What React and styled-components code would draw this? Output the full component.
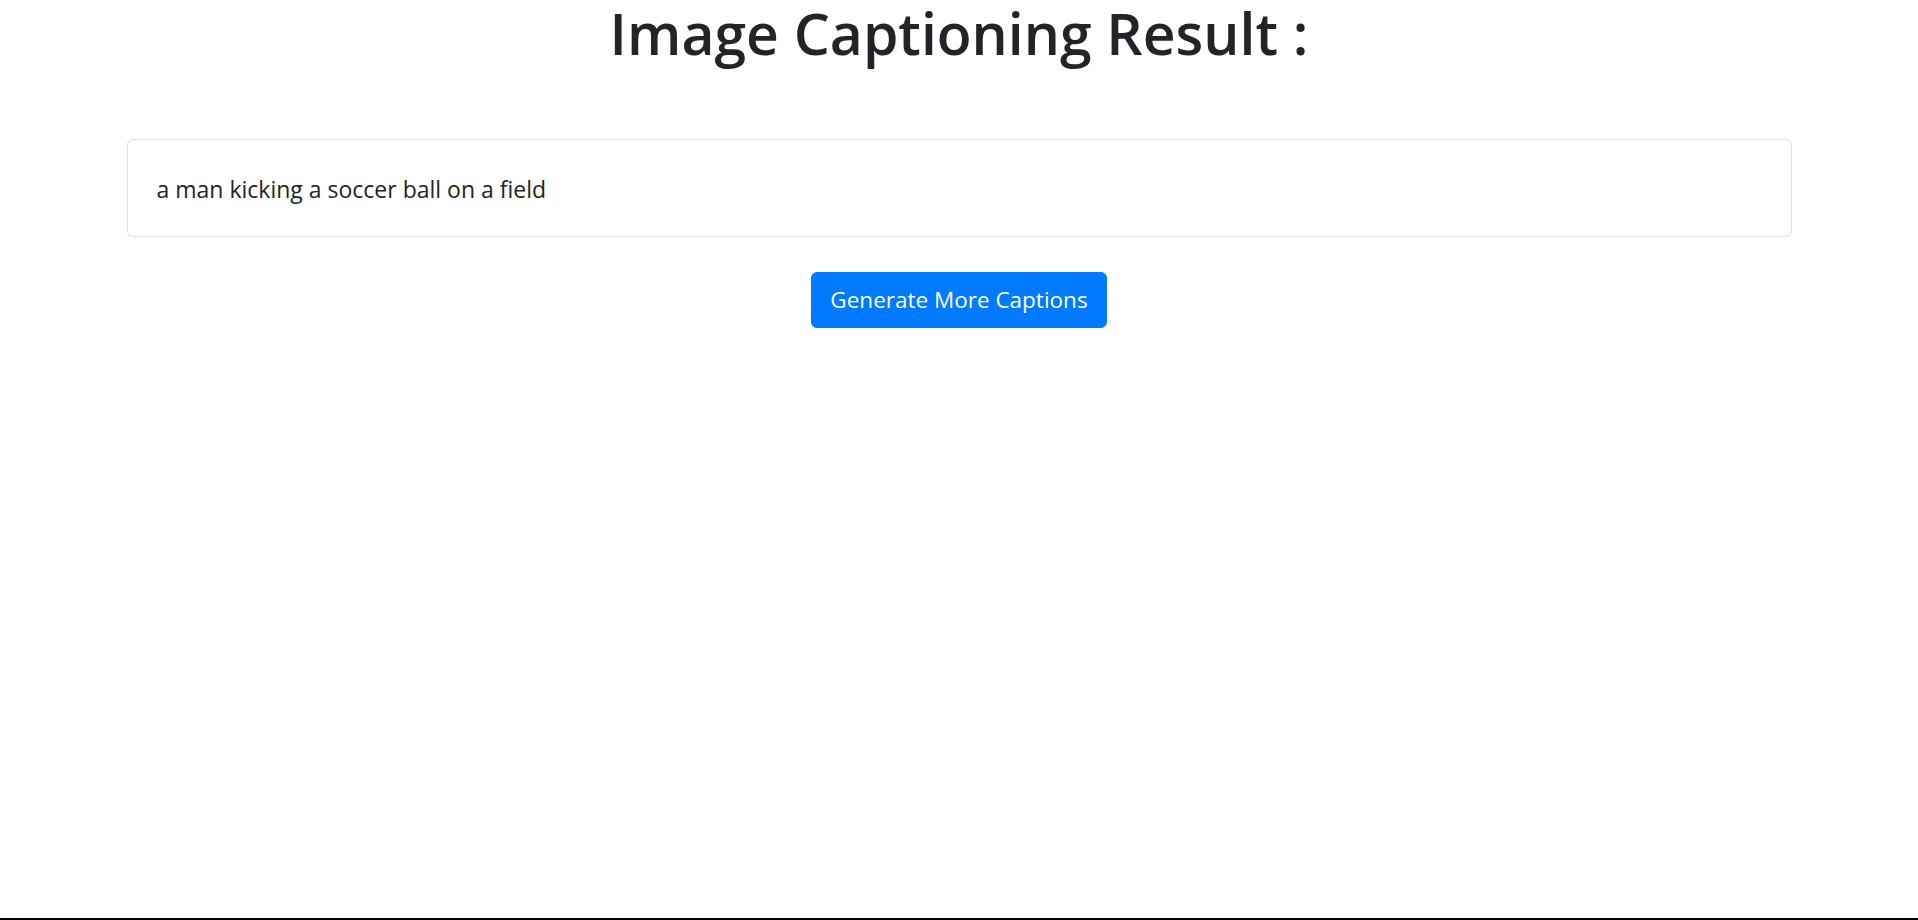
import React from "react";
import styled, { createGlobalStyle } from "styled-components";

const GlobalStyle = createGlobalStyle`
  html, body {
    margin: 0;
    padding: 0;
    background: #ffffff;
  }
  body {
    font-family: "Open Sans", "Noto Sans", sans-serif;
    color: #212529;
  }
  * { box-sizing: border-box; }
`;

const Page = styled.div`
  height: 920px;
  border-bottom: 2px solid #000000;
  display: flex;
  flex-direction: column;
  align-items: center;
`;

const Title = styled.h1`
  margin: 0;
  font-family: "Open Sans", "Noto Sans", sans-serif;
  font-weight: 600;
  font-size: 57px;
  line-height: 66px;
  color: #212529;
  text-align: center;
`;

const Card = styled.div`
  margin-top: 73px;
  width: 1665px;
  border: 1px solid rgba(0, 0, 0, 0.125);
  border-radius: 6px;
  padding: 34px 30px 32px 29px;
  background: #ffffff;
`;

const Caption = styled.p`
  margin: 0;
  font-size: 23px;
  line-height: 30px;
  color: #212529;
`;

const PrimaryButton = styled.button`
  margin-top: 35px;
  font-family: "Open Sans", "Noto Sans", sans-serif;
  font-size: 22.5px;
  line-height: 30px;
  padding: 12px 18px;
  color: #ffffff;
  background: #007bff;
  border: 1px solid #007bff;
  border-radius: 6px;
  cursor: pointer;
`;

export default function App() {
  return (
    <>
      <GlobalStyle />
      <Page>
        <Title>Image Captioning Result :</Title>
        <Card>
          <Caption>a man kicking a soccer ball on a field</Caption>
        </Card>
        <PrimaryButton>Generate More Captions</PrimaryButton>
      </Page>
    </>
  );
}
